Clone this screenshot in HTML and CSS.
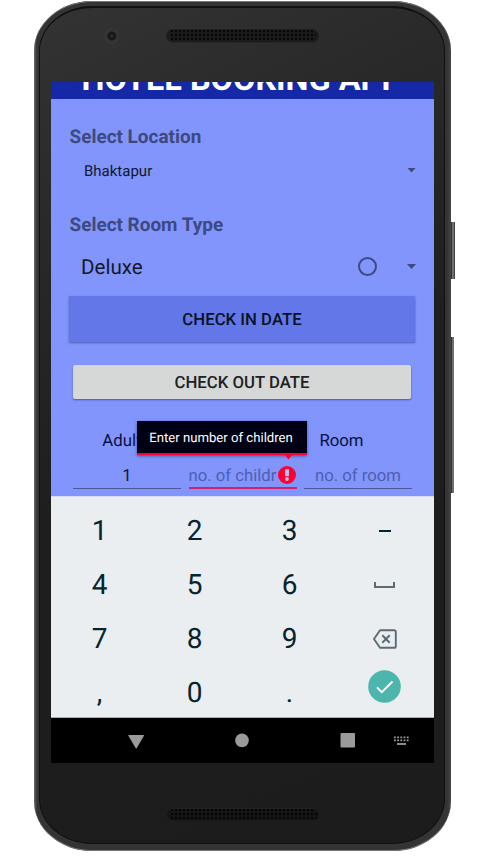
FILE: index.html
```
<!DOCTYPE html>
<html lang="en">
<head>
<meta charset="utf-8">
<title>Hotel Booking App</title>
<link rel="stylesheet" href="styles.css">
</head>
<body>
<div class="phone">
  <i class="side power"></i><i class="side volume"></i>
  <div class="face">
    <div class="bezel top">
      <i class="camera"></i>
      <svg class="speaker" width="154" height="14"><defs><pattern id="mesh" width="4" height="4" patternUnits="userSpaceOnUse"><circle cx="2" cy="2" r="1.2" fill="#050505"/></pattern></defs><rect x=".5" y=".5" width="152" height="12.5" rx="6.2" fill="#1b1b1b" stroke="#202020"/><rect x="3" y="1" width="147" height="12" rx="5" fill="url(#mesh)"/></svg>
    </div>
    <main class="screen">
      <section class="app">
        <header class="title"><h1>HOTEL BOOKING APP</h1></header>
        <div class="form">
          <h2>Select Location</h2>
          <div class="spinner location"><span>Bhaktapur</span><i class="arrow"></i></div>
          <h2>Select Room Type</h2>
          <div class="spinner room"><span>Deluxe</span><i class="radio"></i><i class="arrow"></i></div>
          <button class="checkin">CHECK IN DATE</button>
          <button class="checkout">CHECK OUT DATE</button>
          <div class="labels"><span>Adults</span><span>Children</span><span>Room</span></div>
          <div class="fields">
            <div class="field value">1</div>
            <div class="field error"><span>no. of children</span>
              <svg class="alert" width="18" height="18" viewBox="0 0 18 18"><circle cx="9" cy="9" r="9" fill="#ff0030"/><path d="M7 3.2h4v7H7z" fill="#b9bdf0"/><circle cx="9" cy="13" r="1.9" fill="#b9bdf0"/></svg>
              <div class="tooltip">Enter number of children</div>
            </div>
            <div class="field">no. of room</div>
          </div>
        </div>
      </section>
      <section class="keypad">
        <b>1</b><b>2</b><b>3</b><b><i class="dash"></i></b>
        <b>4</b><b>5</b><b>6</b><b><svg width="22" height="8" viewBox="0 0 22 8"><path d="M1 1v5h19V1" fill="none" stroke="#5b6b73" stroke-width="2"/></svg></b>
        <b>7</b><b>8</b><b>9</b><b><svg width="24" height="20" viewBox="0 0 24 20"><path d="M7 1.2h14.2a1.6 1.6 0 0 1 1.6 1.6v14.4a1.6 1.6 0 0 1-1.6 1.6H7L1 10z" fill="none" stroke="#5b6b73" stroke-width="1.9" stroke-linejoin="round"/><path d="M9.3 6.2l7.4 7.6m0-7.6l-7.4 7.6" stroke="#5b6b73" stroke-width="2"/></svg></b>
        <b>,</b><b>0</b><b>.</b><b class="done"><svg width="33" height="33" viewBox="0 0 33 33"><circle cx="16.5" cy="16.5" r="16.3" fill="#4db6ac"/><path d="M9 17.3l4.8 4.8L24.5 11.5" fill="none" stroke="#fff" stroke-width="1.9"/></svg></b>
      </section>
      <nav class="navbar">
        <svg width="383" height="45"><path d="M77.8 17h14.6q1 0 .4 1l-7 12q-.6 1-1.2 0l-7.1-12q-.5-1 .3-1z" fill="#9b9b9b"/><circle cx="191" cy="22.4" r="6.8" fill="#9b9b9b"/><rect x="289.5" y="15" width="14.5" height="14.5" rx="1" fill="#9b9b9b"/><path d="M343 19.3h15M343 22.3h15" stroke="#9b9b9b" stroke-width="1.8" stroke-dasharray="1.8 1.4"/><path d="M346 26h9" stroke="#9b9b9b" stroke-width="1.8"/></svg>
      </nav>
    </main>
    <div class="bezel bottom">
      <svg class="speaker" width="154" height="14"><rect x=".5" y=".5" width="153" height="12.5" rx="6.2" fill="#151515" stroke="#202020"/><rect x="3" y="1" width="148" height="12" rx="5" fill="url(#mesh)"/></svg>
    </div>
  </div>
</div>
</body>
</html>
```
FILE: styles.css
```
* { box-sizing: border-box; }
body { margin: 0; background: #fff; font-family: Roboto, sans-serif; overflow: hidden; text-rendering: geometricPrecision; }
.phone { position: relative; width: 417px; height: 850px; margin: 1px 0 0 34px; padding: 5px 6px 7px 5px; border-radius: 58px / 50px; background: linear-gradient(90deg, #686868 0, #343434 3px, #343434 413px, #464646 100%); box-shadow: inset 0 1px #777, inset 0 -1px #777; }
.side { position: absolute; left: 417px; width: 4px; background: linear-gradient(90deg, #333 0, #333 1px, #707070 1px, #707070 3px, #444 3px); }
.power { top: 221px; height: 57px; }
.volume { top: 336px; height: 156px; width: 3px; }
.face { height: 838px; border: 1px solid #101010; border-top-width: 2px; border-radius: 53px / 45px; background: linear-gradient(155deg, #333 0, #292929 22%, #1e1e1e 50%, #1c1c1c 100%); padding: 0 11px; }
.bezel { position: relative; height: 74px; }
.bezel.bottom { height: 81px; }
.speaker { position: absolute; left: 115px; top: 21px; }
.bottom .speaker { top: 45px; }
.camera { position: absolute; left: 52px; top: 20px; width: 16px; height: 16px; border-radius: 50%; background: radial-gradient(circle at 55% 50%, #4b3b4c 0, #17161c 2px, #19191f 4px, #353535 5px, #333 8px); }
.screen { width: 383px; height: 681px; background: #000; }
.app { height: 414px; overflow: hidden; background: #8195fd; }
.title { height: 17px; background: #1428a8; overflow: hidden; display: flex; align-items: flex-end; justify-content: center; }
h1 { flex: none; margin: 0 0 1px -1px; color: #fff; font-size: 32.5px; line-height: 38px; white-space: nowrap; }
.form { padding: 24px 18px 0; color: #14182c; }
h2 { margin: 0; height: 27px; line-height: 27px; font-size: 18.95px; font-weight: 700; color: #3e497e; padding-left: .5px; }
.spinner { display: flex; align-items: center; }
.spinner span { margin-right: auto; }
.location { height: 42px; margin-bottom: 19px; padding-left: 15px; font-size: 15px; }
.room { height: 58px; padding-left: 12px; font-size: 20.6px; }
.room span { padding-top: 2px; }
.arrow { width: 9px; height: 5px; background: #3e497e; clip-path: polygon(0 0, 100% 0, 50% 100%); }
.location .arrow { margin-bottom: 2px; }
.room .arrow { margin-bottom: 1px; }
.radio { width: 19px; height: 19px; border: 2px solid #3e497e; border-radius: 50%; margin: 0 30px 1px 0; }
button { display: block; border: 0; padding: 0; font: 500 16.75px Roboto, sans-serif; text-rendering: geometricPrecision; }
.checkin { width: 346px; height: 45.5px; margin-bottom: 23px; padding-top: 2px; background: #6377e8; color: #061426; box-shadow: 0 1px 2px #4e5cae; }
.checkout { width: 338px; height: 34px; margin: 0 4px 28px; padding-top: 2px; border-radius: 2px; background: #d6d8d7; color: #202122; box-shadow: 0 1px 2px #4658a8; }
.labels { display: grid; grid-template-columns: repeat(3, 107.6px); margin-left: 3.5px; height: 24px; line-height: 28px; text-align: center; font-size: 16.8px; color: #0b1040; }
.fields { display: grid; grid-template-columns: repeat(3, 108px); gap: 7.5px; margin: 11px 0 0 4px; }
.field { position: relative; height: 27.5px; line-height: 30px; border-bottom: 1px solid #4d5996; text-align: center; color: #4f5fae; font-size: 16.7px; white-space: nowrap; }
.value { color: #14182c; }
.error { border-bottom: 2px solid #d32069; text-align: left; }
.error > span { display: block; width: 88px; overflow: hidden; }
.alert { position: absolute; right: 1px; top: 4px; }
.tooltip { position: absolute; left: -52px; top: -41px; width: 170px; height: 34px; background: #000014; border-bottom: 2px solid #ff0030; color: #fff; font-size: 13.15px; line-height: 36px; text-align: center; padding-right: 1px; box-shadow: 0 1px 3px #424c91; }
.tooltip::after { content: ""; position: absolute; right: 13px; top: 33px; width: 10px; height: 6px; background: #ff0030; clip-path: polygon(0 0, 100% 0, 50% 100%); }
.keypad { height: 222px; border-top: 1px solid #d6def0; border-bottom: 1px solid #a9adb0; background: #eaeef1; display: grid; grid-template-columns: repeat(4, 95px); grid-auto-rows: 53.9px; padding: 6.8px 0 0 1px; }
.keypad b { display: flex; align-items: center; justify-content: center; font-size: 28px; font-weight: 400; color: #06242e; }
.dash { width: 12px; height: 2px; background: #06242e; }
.keypad .done { padding-bottom: 12px; }
.navbar { height: 45px; }
.navbar svg { display: block; }
```
